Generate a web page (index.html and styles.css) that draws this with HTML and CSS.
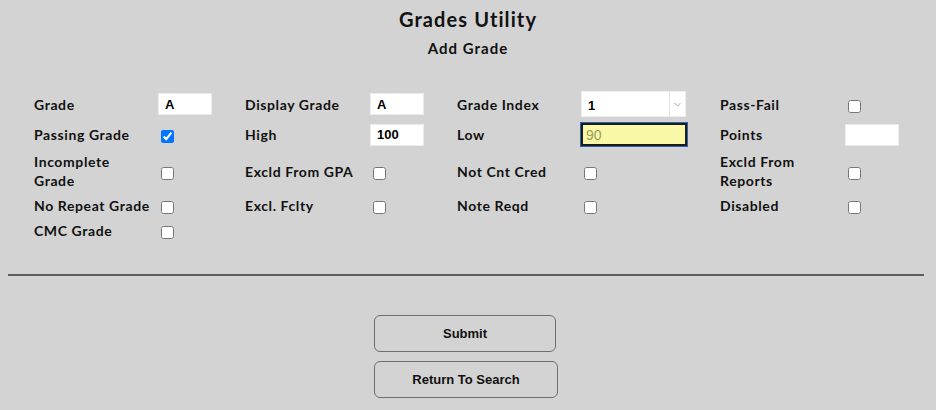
FILE: index.html
```html
<!DOCTYPE html>
<html lang="en">
<head>
<meta charset="utf-8">
<title>Grades Utility</title>
<link rel="stylesheet" href="styles.css">
</head>
<body>
<h1 class="title">Grades Utility</h1>
<h2 class="subtitle">Add Grade</h2>
<form class="grade-form">
  <div class="grid">
    <label class="lbl">Grade</label>
    <div class="ctl"><input class="txt" type="text" value="A"></div>
    <label class="lbl">Display Grade</label>
    <div class="ctl"><input class="txt" type="text" value="A"></div>
    <label class="lbl">Grade Index</label>
    <div class="ctl">
      <div class="select"><span class="select-val">1</span><span class="select-arrow"><svg width="7" height="5" viewBox="0 0 7 5"><path d="M0.5 1 L3.5 4 L6.5 1" fill="none" stroke="#a0a0a0" stroke-width="1"/></svg></span></div>
    </div>
    <label class="lbl">Pass-Fail</label>
    <div class="ctl"><input class="chk" type="checkbox"></div>

    <label class="lbl">Passing Grade</label>
    <div class="ctl"><input class="chk" type="checkbox" checked></div>
    <label class="lbl">High</label>
    <div class="ctl"><input class="txt" type="text" value="100"></div>
    <label class="lbl">Low</label>
    <div class="ctl"><input class="txt low" type="text" value="90"></div>
    <label class="lbl">Points</label>
    <div class="ctl"><input class="txt" type="text" value=""></div>

    <label class="lbl">Incomplete<br>Grade</label>
    <div class="ctl"><input class="chk" type="checkbox"></div>
    <label class="lbl">Excld From GPA</label>
    <div class="ctl"><input class="chk" type="checkbox"></div>
    <label class="lbl">Not Cnt Cred</label>
    <div class="ctl"><input class="chk" type="checkbox"></div>
    <label class="lbl">Excld From<br>Reports</label>
    <div class="ctl"><input class="chk" type="checkbox"></div>

    <label class="lbl">No Repeat Grade</label>
    <div class="ctl"><input class="chk" type="checkbox"></div>
    <label class="lbl">Excl. Fclty</label>
    <div class="ctl"><input class="chk" type="checkbox"></div>
    <label class="lbl">Note Reqd</label>
    <div class="ctl"><input class="chk" type="checkbox"></div>
    <label class="lbl">Disabled</label>
    <div class="ctl"><input class="chk" type="checkbox"></div>

    <label class="lbl">CMC Grade</label>
    <div class="ctl"><input class="chk" type="checkbox"></div>
  </div>
  <hr class="rule">
  <div class="actions">
    <button type="button" class="btn btn-submit">Submit</button>
    <button type="button" class="btn btn-return">Return To Search</button>
  </div>
</form>
</body>
</html>
```
FILE: styles.css
```css
html, body {
  background: #d3d3d3;
}
body {
  margin: 8px;
  font-family: Lato, "Noto Sans", sans-serif;
  color: #111;
}
.title {
  margin: 0;
  font-size: 20px;
  line-height: 23px;
  font-weight: 700;
  letter-spacing: 1.1px;
  text-align: center;
  color: #111;
}
.subtitle {
  margin: 8px 0 0;
  font-size: 15px;
  line-height: 18px;
  font-weight: 700;
  letter-spacing: 1px;
  text-align: center;
  color: #111;
}
.grade-form {
  margin: 31px 0 0;
}
.grid {
  display: grid;
  grid-template-columns: 124px 87px 125px 87px 124px 139px 125px 60px;
  padding-left: 26px;
  align-items: center;
}
.lbl {
  padding: 3px 0;
  font-size: 14px;
  line-height: 19px;
  font-weight: 700;
  letter-spacing: 0.6px;
  white-space: nowrap;
  color: #111;
}
.ctl {
  padding: 3px 0;
  display: flex;
  align-items: center;
}
.txt {
  box-sizing: border-box;
  width: 54px;
  height: 22px;
  margin: 0;
  padding: 0 6px;
  border: 1px solid #ececec;
  background: #fff;
  font-family: "Liberation Sans", Arial, sans-serif;
  font-size: 13px;
  font-weight: 700;
  color: #000;
  outline: none;
}
.txt.low {
  width: 106px;
  height: 23px;
  margin-left: 0;
  padding: 0 3px;
  border: 2px solid #1c1c1c;
  outline: 1px solid #2a63b3;
  background: #f8f8a6;
  font-weight: 400;
  font-size: 14px;
  color: #9b9b5e;
}
.chk {
  width: 13px;
  height: 13px;
  margin: 5px 3px 1px;
}
.select {
  box-sizing: border-box;
  width: 105px;
  height: 26px;
  display: flex;
  align-items: stretch;
  background: #fff;
  border: 1px solid #eeeeee;
}
.select-val {
  flex: 1;
  display: flex;
  align-items: center;
  padding: 2px 0 0 6px;
  font-family: "Liberation Sans", Arial, sans-serif;
  font-size: 13px;
  font-weight: 700;
  color: #000;
}
.select-arrow {
  width: 15px;
  display: flex;
  align-items: center;
  justify-content: center;
  border-left: 1px solid #e2e2e2;
}
.rule {
  margin: 31px 4px 0 0;
  height: 0;
  border: none;
  border-top: 2px solid #5c5c5c;
}
.actions {
  margin-top: 39px;
  display: flex;
  flex-direction: column;
  align-items: flex-start;
  gap: 9px;
  padding-left: 366px;
}
.btn {
  box-sizing: border-box;
  height: 37px;
  margin: 0;
  padding: 0;
  background: transparent;
  border: 1px solid #6e6e6e;
  border-radius: 6px;
  font-family: "Liberation Sans", Arial, sans-serif;
  font-size: 13px;
  font-weight: 700;
  color: #111;
}
.btn-submit {
  width: 182px;
}
.btn-return {
  width: 184px;
}
```
